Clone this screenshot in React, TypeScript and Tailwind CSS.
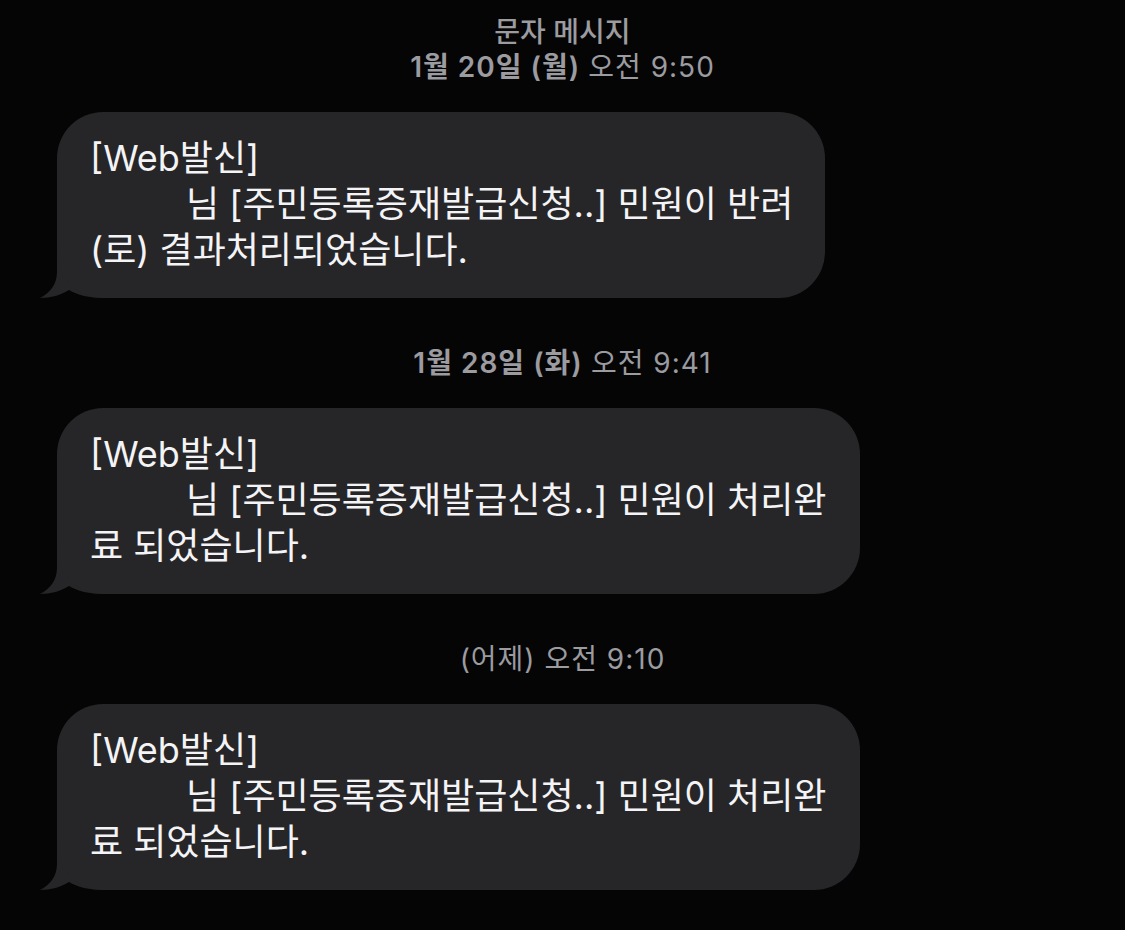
import React from "react";

const font = { fontFamily: '"Inter", "Noto Sans CJK KR", sans-serif' };

function Tail() {
  // little hook at the bubble's bottom-left corner
  return (
    <svg
      className="absolute left-[-18px] bottom-0"
      width="80"
      height="48"
      viewBox="0 0 80 48"
    >
      <path
        d="M18 0 L18 22 C18 34 11 43 1 48 C12 48 22 45 30 40 C38 45 50 48 66 48 L80 48 L80 0 Z"
        fill="#262629"
      />
    </svg>
  );
}

function Bubble({ width, lines }: { width: string; lines: React.ReactNode[] }) {
  return (
    <div className={`relative ${width}`}>
      <Tail />
      <div className="relative bg-[#262629] rounded-[46px] pl-[33px] pr-[20px] pt-[23px] pb-[25px] text-[36px] leading-[46px] text-[#f4f4f6] whitespace-nowrap">
        {lines.map((l, i) => (
          <div key={i}>{l}</div>
        ))}
      </div>
    </div>
  );
}

function Stamp({ bold, rest }: { bold?: string; rest: string }) {
  return (
    <div className="text-center text-[28px] leading-[35px] tracking-[1px] text-[#9b9ba0]">
      {bold && <span className="font-semibold">{bold} </span>}
      <span>{rest}</span>
    </div>
  );
}

const Indent = () => <span className="inline-block w-[96px]" />;

export default function App() {
  return (
    <div className="min-h-[930px] w-[1125px] bg-[#050505] pt-[15px]" style={font}>
      <div className="text-center text-[28px] leading-[35px] text-[#9b9ba0] font-medium">
        문자 메시지
      </div>
      <Stamp bold="1월 20일 (월)" rest="오전 9:50" />

      <div className="pl-[57px] mt-[27px]">
        <Bubble
          width="w-[768px]"
          lines={[
            "[Web발신]",
            <>
              <Indent />님 [주민등록증재발급신청..] 민원이 반려
            </>,
            "(로) 결과처리되었습니다.",
          ]}
        />
      </div>

      <div className="mt-[48px] mb-[27px]">
        <Stamp bold="1월 28일 (화)" rest="오전 9:41" />
      </div>

      <div className="pl-[57px]">
        <Bubble
          width="w-[803px]"
          lines={[
            "[Web발신]",
            <>
              <Indent />님 [주민등록증재발급신청..] 민원이 처리완
            </>,
            "료 되었습니다.",
          ]}
        />
      </div>

      <div className="mt-[48px] mb-[27px]">
        <Stamp rest="(어제) 오전 9:10" />
      </div>

      <div className="pl-[57px]">
        <Bubble
          width="w-[803px]"
          lines={[
            "[Web발신]",
            <>
              <Indent />님 [주민등록증재발급신청..] 민원이 처리완
            </>,
            "료 되었습니다.",
          ]}
        />
      </div>
    </div>
  );
}
